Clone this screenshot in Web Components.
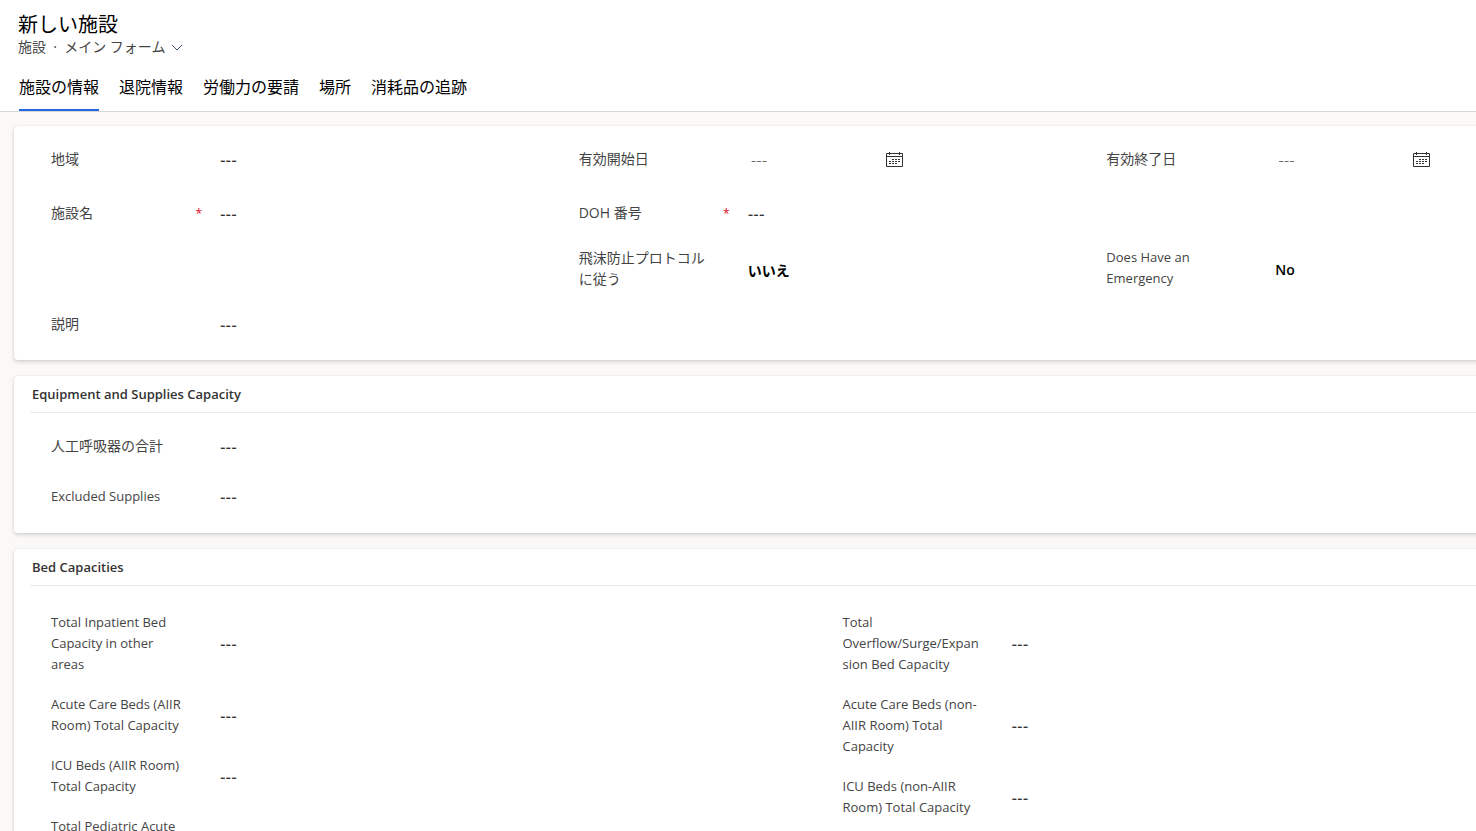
<!DOCTYPE html>
<html lang="ja">
<head>
<meta charset="utf-8">
<title>新しい施設</title>
<style>
  html, body { height: 100%; }
  body {
    margin: 0;
    overflow: hidden;
    background: #faf9f8;
    color: #444;
    font-family: "Open Sans", "Noto Sans CJK JP", sans-serif;
    font-size: 14px;
    line-height: 21px;
  }
</style>
</head>
<body>
<facility-page>
  <form-header slot="header" heading="新しい施設" entity="施設" form="メイン フォーム"></form-header>
  <form-tabs slot="header" items="施設の情報,退院情報,労働力の要請,場所,消耗品の追跡"></form-tabs>

  <form-section columns="3">
    <form-column>
      <form-field label="地域"></form-field>
      <form-field label="施設名" required></form-field>
      <form-spacer></form-spacer>
      <form-field label="説明"></form-field>
    </form-column>
    <form-column>
      <form-field label="有効開始日" type="date"></form-field>
      <form-field label="DOH 番号" required></form-field>
      <form-field label="飛沫防止プロトコル|に従う" type="choice" value="いいえ" other="はい"></form-field>
    </form-column>
    <form-column>
      <form-field label="有効終了日" type="date"></form-field>
      <form-spacer short></form-spacer>
      <form-field lang="en" label="Does Have an Emergency" type="choice" value="No" other="Yes"></form-field>
    </form-column>
  </form-section>

  <form-section heading="Equipment and Supplies Capacity" columns="1">
    <form-column density="medium">
      <form-field label="人工呼吸器の合計"></form-field>
      <form-field lang="en" label="Excluded Supplies"></form-field>
    </form-column>
  </form-section>

  <form-section heading="Bed Capacities" columns="2">
    <form-column density="stacked">
      <form-field lang="en" label="Total Inpatient Bed Capacity in other areas"></form-field>
      <form-field lang="en" label="Acute Care Beds (AIIR Room) Total Capacity"></form-field>
      <form-field lang="en" label="ICU Beds (AIIR Room) Total Capacity"></form-field>
      <form-field lang="en" label="Total Pediatric Acute Care Beds"></form-field>
    </form-column>
    <form-column density="stacked">
      <form-field lang="en" label="Total Overflow/Surge/Expansion Bed Capacity"></form-field>
      <form-field lang="en" label="Acute Care Beds (non-AIIR Room) Total Capacity"></form-field>
      <form-field lang="en" label="ICU Beds (non-AIIR Room) Total Capacity"></form-field>
    </form-column>
  </form-section>
</facility-page>

<script>
class FacilityPage extends HTMLElement {
  constructor() {
    super();
    this.attachShadow({ mode: 'open' }).innerHTML = `
      <style>
        :host { display: flex; flex-direction: column; height: 100%; }
        header { background: #fff; border-bottom: 1px solid #d6d6d6; }
        main { flex: 1; min-height: 0; overflow: hidden; }
        .sections { display: flex; flex-direction: column; gap: 16px; width: calc(100% + 139px); padding: 14px; }
      </style>
      <header><slot name="header"></slot></header>
      <main><div class="sections"><slot></slot></div></main>`;
  }
}

class FormHeader extends HTMLElement {
  connectedCallback() {
    this.attachShadow({ mode: 'open' }).innerHTML = `
      <style>
        :host { display: block; padding: 14px 18px 0; }
        h1 { margin: 0; color: #000; font-size: 20px; line-height: 22px; font-weight: 400; }
        .sub { display: flex; align-items: center; line-height: 22px; white-space: pre; }
        button { display: flex; align-items: center; gap: 6px; margin: 0; padding: 0; border: 0;
          background: none; color: inherit; font: inherit; line-height: 22px; }
        svg { width: 12px; height: 12px; fill: none; stroke: #3b5573; }
      </style>
      <h1>${this.getAttribute('heading')}</h1>
      <div class="sub"><span>${this.getAttribute('entity')}</span><span>  ·  </span><button type="button">${this.getAttribute('form')}<svg viewBox="0 0 12 12" aria-hidden="true"><path d="M1 4 6 9 11 4"/></svg></button></div>`;
  }
}

class FormTabs extends HTMLElement {
  connectedCallback() {
    const tabs = this.getAttribute('items').split(',').map((t, i) =>
      `<button type="button" role="tab" aria-selected="${i === 0}">${t}</button>`).join('');
    this.attachShadow({ mode: 'open' }).innerHTML = `
      <style>
        :host { display: block; padding: 5px 19px 0; }
        nav { display: flex; gap: 20px; }
        button { margin: 0; padding: 12px 0 10px; border: 0; border-bottom: 2px solid transparent;
          background: none; color: #000; font: inherit; font-size: 16px; line-height: 24px; }
        button[aria-selected="true"] { border-color: #2266e3; }
      </style>
      <nav role="tablist">${tabs}</nav>`;
  }
}

class FormSection extends HTMLElement {
  connectedCallback() {
    const heading = this.getAttribute('heading');
    this.attachShadow({ mode: 'open' }).innerHTML = `
      <style>
        :host { display: block; padding: 0 16px; border-radius: 4px; background: #fff;
          box-shadow: 0 2px 4px rgba(0,0,0,.14), 0 0 2px rgba(0,0,0,.1); }
        h2 { margin: 0; padding: 8px 2px 7px; border-bottom: 1px solid #edebe9; color: #333;
          font-size: 13px; line-height: 21px; font-weight: 600; }
        .grid { display: grid; grid-template-columns: repeat(${this.getAttribute('columns')}, 1fr); }
      </style>
      ${heading ? `<h2>${heading}</h2>` : ''}
      <div class="grid"><slot></slot></div>`;
  }
}

class FormColumn extends HTMLElement {
  constructor() {
    super();
    this.attachShadow({ mode: 'open' }).innerHTML = `
      <style>
        :host { display: flex; flex-direction: column; padding: 6px 0 9px 21px; --row: 54px; --pad: 7px; }
        :host([density="medium"]) { padding: 8px 0 12px 21px; --row: 50px; }
        :host([density="stacked"]) { padding: 26px 0 26px 21px; gap: 19px; --row: 21px; --pad: 0; }
      </style>
      <slot></slot>`;
  }
}

class FormSpacer extends HTMLElement {
  constructor() {
    super();
    this.attachShadow({ mode: 'open' }).innerHTML = `
      <style>
        :host { display: block; height: 57px; }
        :host([short]) { height: 54px; }
      </style>`;
  }
}

class FormField extends HTMLElement {
  connectedCallback() {
    const label = this.getAttribute('label').replace('|', '<wbr>');
    const type = this.getAttribute('type');
    const required = this.hasAttribute('required');
    let control = `<input id="value" type="text" placeholder="---"${required ? ' required' : ''}>`;
    if (type === 'choice') {
      control = `<select id="value"><option selected>${this.getAttribute('value')}</option><option>${this.getAttribute('other')}</option></select>`;
    } else if (type === 'date') {
      control = `<input id="value" class="date" type="text" placeholder="---">
        <button type="button" aria-label="カレンダー"><svg viewBox="0 0 17 16" aria-hidden="true">
          <path d="M.5 1.5h16v13H.5zM.5 4.5h16M3.5 0v3M13.5 0v3" fill="none" stroke="#333"/>
          <path d="M6 7.5h8M3 9.5h11M3 11.5h8" fill="none" stroke="#333" stroke-width="1" stroke-dasharray="2 1"/>
        </svg></button>`;
    }
    this.attachShadow({ mode: 'open' }).innerHTML = `
      <style>
        :host { display: grid; grid-template-columns: 138px 17px 1fr; align-items: center;
          box-sizing: border-box; min-height: var(--row); padding: var(--pad) 0; }
        label { padding-bottom: 2px; word-break: keep-all; overflow-wrap: anywhere; }
        :host([lang="en"]) label { padding-bottom: 0; font-size: 13px; }
        .mark { color: #e00b1c; text-align: right; padding-right: 4px; font-size: 12px; }
        .control { display: flex; align-items: center; padding: 2px 0 0 14px; height: 21px; }
        input, select { box-sizing: border-box; margin: 0; padding: 0; border: 0; outline: 0; background: none;
          color: #000; font: inherit; font-weight: 600; line-height: 21px; height: 21px; appearance: none; }
        input { width: 100%; font-family: Inter, sans-serif; font-size: 12px; font-weight: 700; }
        input::placeholder { color: #333; opacity: 1; }
        input.date { width: 138px; padding-left: 3px; font-weight: 400; }
        input.date::placeholder { color: #666; }
        select { font-weight: 700; }
        :host([lang="en"]) select { font-weight: 600; }
        button { display: flex; margin: 0; padding: 0; border: 0; background: none; }
        svg { width: 17px; height: 16px; }
      </style>
      <label for="value">${label}</label>
      <span class="mark">${required ? '*' : ''}</span>
      <div class="control">${control}</div>`;
  }
}

customElements.define('facility-page', FacilityPage);
customElements.define('form-header', FormHeader);
customElements.define('form-tabs', FormTabs);
customElements.define('form-section', FormSection);
customElements.define('form-column', FormColumn);
customElements.define('form-spacer', FormSpacer);
customElements.define('form-field', FormField);
</script>
</body>
</html>
